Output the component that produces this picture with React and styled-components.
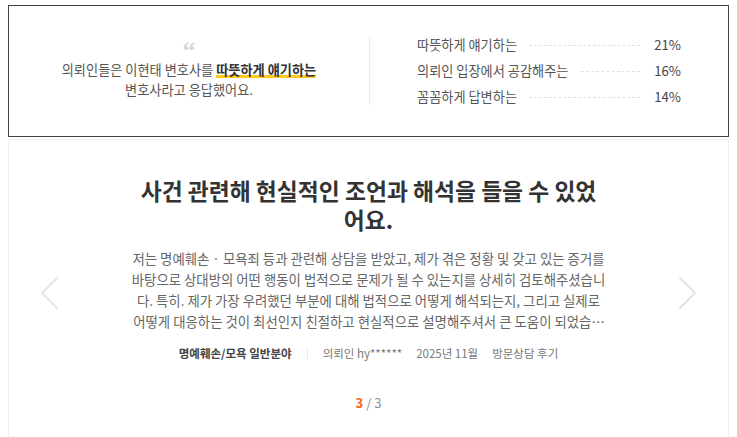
import styled, { createGlobalStyle } from "styled-components";

const GlobalStyle = createGlobalStyle`
  body {
    margin: 5px 8px 0;
    background: #fff;
    font-family: "Noto Sans CJK KR", "Noto Sans", sans-serif;
    color: #333;
  }
`;

const SummaryBox = styled.div`
  display: flex;
  align-items: center;
  height: 130px;
  border: 1px solid #3d4249;
`;

const QuoteSide = styled.div`
  flex: 1;
  display: flex;
  flex-direction: column;
  align-items: center;
  text-align: center;
  font-size: 13.2px;
  line-height: 20px;
  color: #555;
`;

const QuoteMark = styled.div`
  font-family: "Liberation Serif", serif;
  font-weight: bold;
  font-size: 26px;
  line-height: 18px;
  height: 14px;
  color: #d3d7dc;
  margin-bottom: 4px;
`;

const Highlight = styled.strong`
  color: #333;
  font-weight: bold;
  background: linear-gradient(transparent 78%, #ffc91f 78%, #ffc91f 94%, transparent 94%);
`;

const Divider = styled.div`
  width: 1px;
  height: 68px;
  background: #e8eaed;
`;

const StatList = styled.ul`
  width: 264px;
  margin: 0;
  padding: 0 47px;
  list-style: none;
  display: flex;
  flex-direction: column;
  gap: 6px;
`;

const StatRow = styled.li`
  display: flex;
  align-items: center;
  font-size: 13.2px;
  line-height: 20px;
  color: #555;
`;

const Dots = styled.span`
  flex: 1;
  margin: 0 14px 0 12px;
  border-top: 1px dashed #dfe2e6;
`;

const Percent = styled.span`
  color: #444;
`;

const ReviewCard = styled.section`
  position: relative;
  margin-top: 2px;
  border: 1px solid #eef0f2;
  border-bottom: none;
  padding: 36px 0 40px;
  display: flex;
  flex-direction: column;
  align-items: center;
`;

const ReviewTitle = styled.h2`
  margin: 0;
  width: 470px;
  text-align: center;
  font-size: 22.8px;
  line-height: 29px;
  font-weight: bold;
  color: #333;
`;

const ReviewBody = styled.p`
  margin: 14px 0 0;
  width: 480px;
  text-align: center;
  font-size: 13.4px;
  line-height: 21px;
  color: #666;
  display: -webkit-box;
  -webkit-line-clamp: 4;
  -webkit-box-orient: vertical;
  overflow: hidden;
`;

const Word = styled.span`
  white-space: nowrap;
`;

const Meta = styled.div`
  margin-top: 12px;
  display: flex;
  align-items: center;
  font-size: 11.5px;
  line-height: 18px;
  color: #777;
`;

const Category = styled.span`
  font-weight: bold;
  color: #444;
`;

const MetaBar = styled.span`
  width: 1px;
  height: 11px;
  background: #e5e7ea;
  margin: 0 15px;
`;

const MetaItem = styled.span`
  & + & {
    margin-left: 14px;
  }
`;

const Pager = styled.div`
  margin-top: 32px;
  font-size: 13px;
  line-height: 18px;
  color: #8a9099;
`;

const Current = styled.span`
  color: #ff5f12;
  font-weight: bold;
`;

const Arrow = styled.button`
  position: absolute;
  top: 136px;
  ${(p) => (p.side === "left" ? "left: 30px;" : "right: 30px;")}
  padding: 0;
  border: none;
  background: none;
  cursor: pointer;
  display: flex;
`;

const Chevron = ({ dir }) => (
  <svg width="20" height="34" viewBox="0 0 20 34" fill="none">
    <path
      d={dir === "left" ? "M18 2 L3 17 L18 32" : "M2 2 L17 17 L2 32"}
      stroke="#e2e6ea"
      strokeWidth="2"
      strokeLinecap="round"
      strokeLinejoin="round"
    />
  </svg>
);

const stats = [
  { label: "따뜻하게 얘기하는", value: "21%" },
  { label: "의뢰인 입장에서 공감해주는", value: "16%" },
  { label: "꼼꼼하게 답변하는", value: "14%" },
];

export default function App() {
  return (
    <>
      <GlobalStyle />
      <SummaryBox>
        <QuoteSide>
          <QuoteMark>“</QuoteMark>
          <div>
            의뢰인들은 이현태 변호사를 <Highlight>따뜻하게 얘기하는</Highlight>
          </div>
          <div>변호사라고 응답했어요.</div>
        </QuoteSide>
        <Divider />
        <StatList>
          {stats.map((s) => (
            <StatRow key={s.label}>
              <span>{s.label}</span>
              <Dots />
              <Percent>{s.value}</Percent>
            </StatRow>
          ))}
        </StatList>
      </SummaryBox>
      <ReviewCard>
        <Arrow side="left" aria-label="이전">
          <Chevron dir="left" />
        </Arrow>
        <ReviewTitle>사건 관련해 현실적인 조언과 해석을 들을 수 있었어요.</ReviewTitle>
        <ReviewBody>
          저는 명예훼손 · 모욕죄 등과 관련해 상담을 받았고, 제가 겪은 정황 및 갖고 있는 증거를
          바탕으로 상대방의 어떤 행동이 법적으로 문제가 될 수 있는지를 상세히 검토해주셨습니다. 특히.
          제가 가장 우려했던 부분에 대해 법적으로 어떻게 해석되는지, 그리고 실제로 <Word>어떻게</Word> 대응하는
          것이 최선인지 친절하고 현실적으로 설명해주셔서 큰 도움이 되었습니다. 앞으로도 필요하면 다시
          상담받고 싶습니다.
        </ReviewBody>
        <Meta>
          <Category>명예훼손/모욕 일반분야</Category>
          <MetaBar />
          <MetaItem>의뢰인 hy******</MetaItem>
          <MetaItem>2025년 11월</MetaItem>
          <MetaItem>방문상담 후기</MetaItem>
        </Meta>
        <Pager>
          <Current>3</Current> / 3
        </Pager>
        <Arrow side="right" aria-label="다음">
          <Chevron dir="right" />
        </Arrow>
      </ReviewCard>
    </>
  );
}
